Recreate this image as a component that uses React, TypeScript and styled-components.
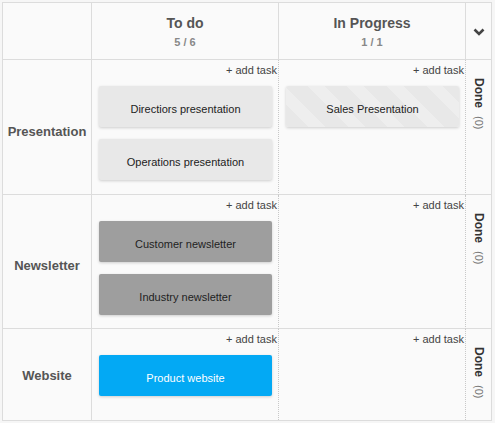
import React from "react";
import styled, { createGlobalStyle, css } from "styled-components";

const Global = createGlobalStyle`
  html, body { margin: 0; padding: 0; background: #f6f6f6; }
  body { font-family: "Liberation Sans", Arial, sans-serif; }
  * { box-sizing: border-box; }
`;

const Board = styled.div`
  margin: 2px;
  width: 490px;
  display: grid;
  grid-template-columns: 89px 187px 187px 25px;
  grid-template-rows: 57px 135px 134px 91px;
  border: 1px solid #dcdcdc;
  background: #fafafa;
`;

const Corner = styled.div`
  border-right: 1px solid #dcdcdc;
  border-bottom: 1px solid #dcdcdc;
`;

const ColHeader = styled.div`
  border-right: 1px solid #dcdcdc;
  border-bottom: 1px solid #dcdcdc;
  display: flex;
  flex-direction: column;
  align-items: center;
  justify-content: center;
  gap: 3px;
`;

const ColTitle = styled.div`
  font-size: 14px;
  line-height: 18px;
  font-weight: bold;
  color: #555;
`;

const ColCount = styled.div`
  font-size: 11px;
  line-height: 14px;
  font-weight: bold;
  color: #888;
`;

const CollapseHeader = styled.div`
  border-bottom: 1px solid #dcdcdc;
  display: flex;
  align-items: center;
  justify-content: center;
  padding-top: 2px;
`;

const LaneName = styled.div<{ $last?: boolean }>`
  border-right: 1px solid #dcdcdc;
  border-bottom: ${(p) => (p.$last ? "none" : "1px solid #dcdcdc")};
  display: flex;
  align-items: center;
  justify-content: center;
  padding-top: ${(p) => (p.$last ? "2px" : "8px")};
  font-size: 13px;
  font-weight: bold;
  color: #555;
`;

const Cell = styled.div<{ $last?: boolean }>`
  border-right: 1px dotted #c8c8c8;
  border-bottom: ${(p) => (p.$last ? "none" : "1px solid #dcdcdc")};
  display: flex;
  flex-direction: column;
  padding: 4px 1px 0 7px;
`;

const AddTask = styled.div`
  align-self: flex-end;
  font-size: 11px;
  line-height: 13px;
  color: #444;
  margin-bottom: 9px;
`;

const Cards = styled.div`
  display: flex;
  flex-direction: column;
  gap: 12px;
  padding-right: 5px;
`;

type Variant = "light" | "gray" | "blue" | "striped";

const Card = styled.div<{ $variant: Variant }>`
  height: 41px;
  border-radius: 2px;
  display: flex;
  align-items: center;
  justify-content: center;
  padding-top: 4px;
  font-size: 11px;
  color: #222;
  box-shadow: 0 1px 3px rgba(0, 0, 0, 0.18);
  ${(p) =>
    p.$variant === "light" &&
    css`
      background: #e8e8e8;
    `}
  ${(p) =>
    p.$variant === "striped" &&
    css`
      background: repeating-linear-gradient(
        45deg,
        #e8e8e8 0px,
        #e8e8e8 16px,
        #eeeeee 16px,
        #eeeeee 28px
      );
    `}
  ${(p) =>
    p.$variant === "gray" &&
    css`
      background: #9e9e9e;
      color: #1e1e1e;
    `}
  ${(p) =>
    p.$variant === "blue" &&
    css`
      background: #03a9f4;
      color: #fff;
    `}
`;

const DoneCell = styled.div<{ $last?: boolean }>`
  border-bottom: ${(p) => (p.$last ? "none" : "1px solid #dcdcdc")};
  display: flex;
  justify-content: center;
  padding-top: 18px;
`;

const DoneLabel = styled.div`
  writing-mode: vertical-rl;
  display: flex;
  align-items: center;
  gap: 8px;
`;

const DoneTitle = styled.span`
  font-size: 12px;
  font-weight: bold;
  color: #333;
`;

const DoneCount = styled.span`
  font-size: 11px;
  color: #777;
`;

const Chevron = () => (
  <svg width="12" height="8" viewBox="0 0 12 8">
    <polyline
      points="1.5,1.5 6,6 10.5,1.5"
      fill="none"
      stroke="#444"
      strokeWidth="2.6"
    />
  </svg>
);

type Task = { title: string; variant: Variant };
type Lane = { name: string; todo: Task[]; progress: Task[] };

const lanes: Lane[] = [
  {
    name: "Presentation",
    todo: [
      { title: "Directiors presentation", variant: "light" },
      { title: "Operations presentation", variant: "light" },
    ],
    progress: [{ title: "Sales Presentation", variant: "striped" }],
  },
  {
    name: "Newsletter",
    todo: [
      { title: "Customer newsletter", variant: "gray" },
      { title: "Industry newsletter", variant: "gray" },
    ],
    progress: [],
  },
  {
    name: "Website",
    todo: [{ title: "Product website", variant: "blue" }],
    progress: [],
  },
];

const Column = ({ tasks, last }: { tasks: Task[]; last?: boolean }) => (
  <Cell $last={last}>
    <AddTask>+ add task</AddTask>
    <Cards>
      {tasks.map((t) => (
        <Card key={t.title} $variant={t.variant}>
          {t.title}
        </Card>
      ))}
    </Cards>
  </Cell>
);

export default function App() {
  return (
    <>
      <Global />
      <Board>
        <Corner />
        <ColHeader>
          <ColTitle>To do</ColTitle>
          <ColCount>5 / 6</ColCount>
        </ColHeader>
        <ColHeader>
          <ColTitle>In Progress</ColTitle>
          <ColCount>1 / 1</ColCount>
        </ColHeader>
        <CollapseHeader>
          <Chevron />
        </CollapseHeader>
        {lanes.map((lane, i) => {
          const last = i === lanes.length - 1;
          return (
            <React.Fragment key={lane.name}>
              <LaneName $last={last}>{lane.name}</LaneName>
              <Column tasks={lane.todo} last={last} />
              <Column tasks={lane.progress} last={last} />
              <DoneCell $last={last}>
                <DoneLabel>
                  <DoneTitle>Done</DoneTitle>
                  <DoneCount>(0)</DoneCount>
                </DoneLabel>
              </DoneCell>
            </React.Fragment>
          );
        })}
      </Board>
    </>
  );
}
